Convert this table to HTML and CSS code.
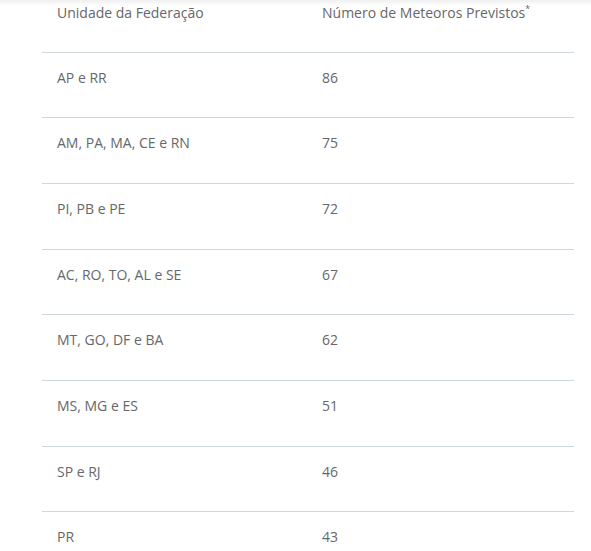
FILE: index.html
```html
<!DOCTYPE html>
<html lang="pt">
<head>
<meta charset="utf-8">
<link rel="stylesheet" href="styles.css">
</head>
<body>
<div class="top-shade"></div>
<div class="wrap">
<table class="meteor-table">
  <thead>
    <tr><th class="col-uf">Unidade da Federação</th><th>Número de Meteoros Previstos<sup>*</sup></th></tr>
  </thead>
  <tbody>
    <tr><td>AP e RR</td><td>86</td></tr>
    <tr><td>AM, PA, MA, CE e RN</td><td>75</td></tr>
    <tr><td>PI, PB e PE</td><td>72</td></tr>
    <tr><td>AC, RO, TO, AL e SE</td><td>67</td></tr>
    <tr><td>MT, GO, DF e BA</td><td>62</td></tr>
    <tr><td>MS, MG e ES</td><td>51</td></tr>
    <tr><td>SP e RJ</td><td>46</td></tr>
    <tr><td>PR</td><td>43</td></tr>
  </tbody>
</table>
</div>
</body>
</html>
```
FILE: styles.css
```css
html, body {
  margin: 0;
  padding: 0;
  background: #fff;
  overflow: hidden;
}
.top-shade {
  position: fixed;
  top: 0;
  left: 0;
  right: 0;
  height: 6px;
  background: linear-gradient(to bottom, rgba(0,0,0,0.06), rgba(0,0,0,0));
  pointer-events: none;
}
.wrap {
  padding-left: 42px;
  margin-top: -12px;
}
.meteor-table {
  width: 532px;
  border-collapse: collapse;
  font-family: "Open Sans", "Liberation Sans", sans-serif;
  font-size: 14px;
  color: #66676a;
  table-layout: fixed;
}
.meteor-table th,
.meteor-table td {
  text-align: left;
  font-weight: 400;
  vertical-align: top;
  padding: 15px 15px 0 15px;
  height: 65.7px;
  box-sizing: border-box;
  line-height: 20px;
  border-bottom: 1px solid #cdd6dd;
}
.meteor-table .col-uf {
  width: 265px;
}
.meteor-table th {
  height: 64px;
}
.meteor-table sup {
  font-size: 9px;
  line-height: 1;
  vertical-align: top;
  position: relative;
  top: 1px;
}
```
